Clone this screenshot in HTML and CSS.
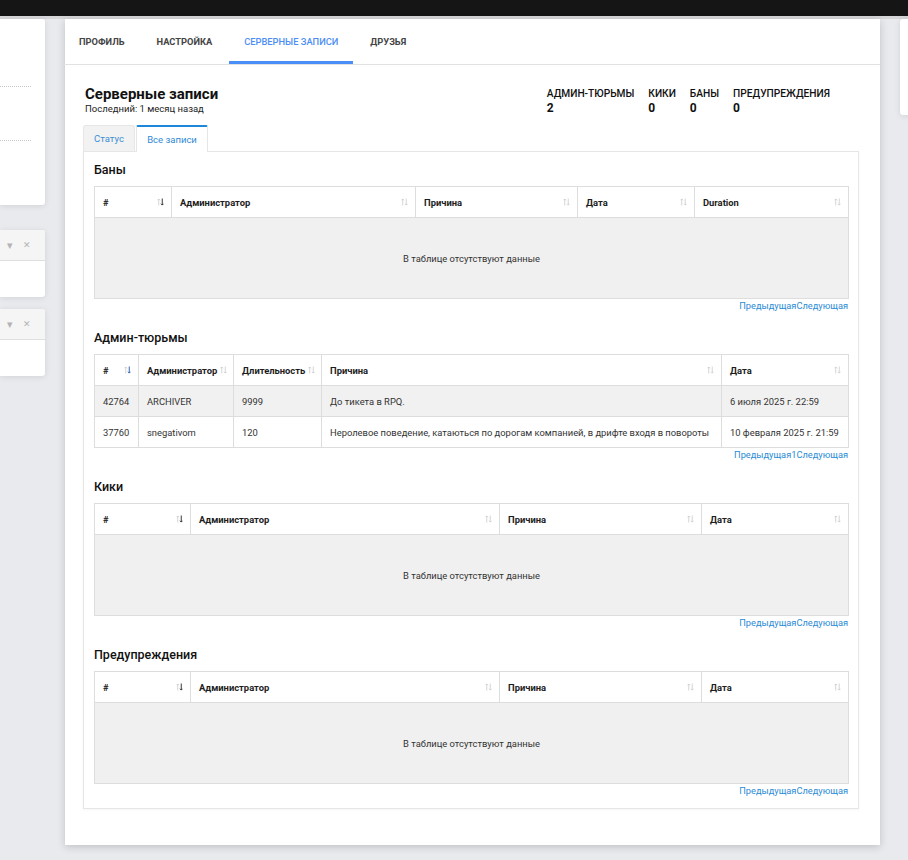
FILE: index.html
```html
<!DOCTYPE html>
<html lang="ru">
<head>
<meta charset="utf-8">
<title>Серверные записи</title>
<link rel="stylesheet" href="styles.css">
</head>
<body>
<div class="topbar"></div>
<div class="layout">
  <aside class="left-col">
    <div class="side-card side-card--tall">
      <div class="dotted dotted--one"></div>
      <div class="dotted dotted--two"></div>
    </div>
    <div class="side-card side-card--widget">
      <div class="widget-head"><span class="w-caret">▾</span><span class="w-close">✕</span></div>
      <div class="widget-body"></div>
    </div>
    <div class="side-card side-card--widget side-card--second">
      <div class="widget-head"><span class="w-caret">▾</span><span class="w-close">✕</span></div>
      <div class="widget-body"></div>
    </div>
  </aside>

  <main class="main-card">
    <nav class="nav">
      <a class="nav-tab">ПРОФИЛЬ</a>
      <a class="nav-tab">НАСТРОЙКА</a>
      <a class="nav-tab nav-tab--active">СЕРВЕРНЫЕ ЗАПИСИ</a>
      <a class="nav-tab">ДРУЗЬЯ</a>
    </nav>
    <div class="content">
      <div class="head-row">
        <div class="title-block">
          <h1 class="title">Серверные записи</h1>
          <div class="subtitle">Последний: 1 месяц назад</div>
        </div>
        <div class="stats">
          <div class="stat"><div class="stat-label">АДМИН-ТЮРЬМЫ</div><div class="stat-num">2</div></div>
          <div class="stat"><div class="stat-label">КИКИ</div><div class="stat-num">0</div></div>
          <div class="stat"><div class="stat-label">БАНЫ</div><div class="stat-num">0</div></div>
          <div class="stat"><div class="stat-label">ПРЕДУПРЕЖДЕНИЯ</div><div class="stat-num">0</div></div>
        </div>
      </div>

      <div class="tabs">
        <div class="tab">Статус</div>
        <div class="tab tab--active">Все записи</div>
      </div>

      <div class="panel">
        <section class="section">
          <h3 class="sec-title">Баны</h3>
          <table class="dt">
            <colgroup><col class="w77"><col class="w244"><col class="w162"><col class="w117"><col class="w154"></colgroup>
            <thead><tr>
              <th>#<span class="sort sort--desc"><svg viewBox="0 0 8 9"><path class="up" d="M2 8.5V1M0.5 2.5L2 1l1.5 1.5"/><path class="dn" d="M6 0.5V8M4.5 6.5L6 8l1.5-1.5"/></svg></span></th>
              <th>Администратор<span class="sort"><svg viewBox="0 0 8 9"><path class="up" d="M2 8.5V1M0.5 2.5L2 1l1.5 1.5"/><path class="dn" d="M6 0.5V8M4.5 6.5L6 8l1.5-1.5"/></svg></span></th>
              <th>Причина<span class="sort"><svg viewBox="0 0 8 9"><path class="up" d="M2 8.5V1M0.5 2.5L2 1l1.5 1.5"/><path class="dn" d="M6 0.5V8M4.5 6.5L6 8l1.5-1.5"/></svg></span></th>
              <th>Дата<span class="sort"><svg viewBox="0 0 8 9"><path class="up" d="M2 8.5V1M0.5 2.5L2 1l1.5 1.5"/><path class="dn" d="M6 0.5V8M4.5 6.5L6 8l1.5-1.5"/></svg></span></th>
              <th>Duration<span class="sort"><svg viewBox="0 0 8 9"><path class="up" d="M2 8.5V1M0.5 2.5L2 1l1.5 1.5"/><path class="dn" d="M6 0.5V8M4.5 6.5L6 8l1.5-1.5"/></svg></span></th>
            </tr></thead>
            <tbody><tr><td class="empty" colspan="5">В таблице отсутствуют данные</td></tr></tbody>
          </table>
          <div class="pager"><a>Предыдущая</a><a>Следующая</a></div>
        </section>

        <section class="section">
          <h3 class="sec-title">Админ-тюрьмы</h3>
          <table class="dt">
            <colgroup><col class="w44"><col class="w95"><col class="w88"><col class="w400"><col class="w127"></colgroup>
            <thead><tr>
              <th>#<span class="sort sort--desc-blue"><svg viewBox="0 0 8 9"><path class="up" d="M2 8.5V1M0.5 2.5L2 1l1.5 1.5"/><path class="dn" d="M6 0.5V8M4.5 6.5L6 8l1.5-1.5"/></svg></span></th>
              <th>Администратор<span class="sort sort--tight"><svg viewBox="0 0 8 9"><path class="up" d="M2 8.5V1M0.5 2.5L2 1l1.5 1.5"/><path class="dn" d="M6 0.5V8M4.5 6.5L6 8l1.5-1.5"/></svg></span></th>
              <th>Длительность<span class="sort sort--tight"><svg viewBox="0 0 8 9"><path class="up" d="M2 8.5V1M0.5 2.5L2 1l1.5 1.5"/><path class="dn" d="M6 0.5V8M4.5 6.5L6 8l1.5-1.5"/></svg></span></th>
              <th>Причина<span class="sort"><svg viewBox="0 0 8 9"><path class="up" d="M2 8.5V1M0.5 2.5L2 1l1.5 1.5"/><path class="dn" d="M6 0.5V8M4.5 6.5L6 8l1.5-1.5"/></svg></span></th>
              <th>Дата<span class="sort"><svg viewBox="0 0 8 9"><path class="up" d="M2 8.5V1M0.5 2.5L2 1l1.5 1.5"/><path class="dn" d="M6 0.5V8M4.5 6.5L6 8l1.5-1.5"/></svg></span></th>
            </tr></thead>
            <tbody>
              <tr class="odd"><td>42764</td><td>ARCHIVER</td><td>9999</td><td>До тикета в RPQ.</td><td>6 июля 2025 г. 22:59</td></tr>
              <tr><td>37760</td><td>snegativom</td><td>120</td><td>Неролевое поведение, катаються по дорогам компанией, в дрифте входя в повороты</td><td>10 февраля 2025 г. 21:59</td></tr>
            </tbody>
          </table>
          <div class="pager"><a>Предыдущая</a><a>1</a><a>Следующая</a></div>
        </section>

        <section class="section">
          <h3 class="sec-title">Кики</h3>
          <table class="dt">
            <colgroup><col class="w96"><col class="w309"><col class="w202"><col class="w147"></colgroup>
            <thead><tr>
              <th>#<span class="sort sort--desc"><svg viewBox="0 0 8 9"><path class="up" d="M2 8.5V1M0.5 2.5L2 1l1.5 1.5"/><path class="dn" d="M6 0.5V8M4.5 6.5L6 8l1.5-1.5"/></svg></span></th>
              <th>Администратор<span class="sort"><svg viewBox="0 0 8 9"><path class="up" d="M2 8.5V1M0.5 2.5L2 1l1.5 1.5"/><path class="dn" d="M6 0.5V8M4.5 6.5L6 8l1.5-1.5"/></svg></span></th>
              <th>Причина<span class="sort"><svg viewBox="0 0 8 9"><path class="up" d="M2 8.5V1M0.5 2.5L2 1l1.5 1.5"/><path class="dn" d="M6 0.5V8M4.5 6.5L6 8l1.5-1.5"/></svg></span></th>
              <th>Дата<span class="sort"><svg viewBox="0 0 8 9"><path class="up" d="M2 8.5V1M0.5 2.5L2 1l1.5 1.5"/><path class="dn" d="M6 0.5V8M4.5 6.5L6 8l1.5-1.5"/></svg></span></th>
            </tr></thead>
            <tbody><tr><td class="empty" colspan="4">В таблице отсутствуют данные</td></tr></tbody>
          </table>
          <div class="pager"><a>Предыдущая</a><a>Следующая</a></div>
        </section>

        <section class="section">
          <h3 class="sec-title">Предупреждения</h3>
          <table class="dt">
            <colgroup><col class="w96"><col class="w309"><col class="w202"><col class="w147"></colgroup>
            <thead><tr>
              <th>#<span class="sort sort--desc"><svg viewBox="0 0 8 9"><path class="up" d="M2 8.5V1M0.5 2.5L2 1l1.5 1.5"/><path class="dn" d="M6 0.5V8M4.5 6.5L6 8l1.5-1.5"/></svg></span></th>
              <th>Администратор<span class="sort"><svg viewBox="0 0 8 9"><path class="up" d="M2 8.5V1M0.5 2.5L2 1l1.5 1.5"/><path class="dn" d="M6 0.5V8M4.5 6.5L6 8l1.5-1.5"/></svg></span></th>
              <th>Причина<span class="sort"><svg viewBox="0 0 8 9"><path class="up" d="M2 8.5V1M0.5 2.5L2 1l1.5 1.5"/><path class="dn" d="M6 0.5V8M4.5 6.5L6 8l1.5-1.5"/></svg></span></th>
              <th>Дата<span class="sort"><svg viewBox="0 0 8 9"><path class="up" d="M2 8.5V1M0.5 2.5L2 1l1.5 1.5"/><path class="dn" d="M6 0.5V8M4.5 6.5L6 8l1.5-1.5"/></svg></span></th>
            </tr></thead>
            <tbody><tr><td class="empty" colspan="4">В таблице отсутствуют данные</td></tr></tbody>
          </table>
          <div class="pager"><a>Предыдущая</a><a>Следующая</a></div>
        </section>
      </div>
    </div>
  </main>

  <aside class="right-col">
    <div class="side-card side-card--right"></div>
  </aside>
</div>
</body>
</html>
```
FILE: styles.css
```css
* { box-sizing: border-box; }

html, body {
  margin: 0;
  padding: 0;
  height: 100%;
  overflow: hidden;
}

body {
  background: #e9eaee;
  font-family: Roboto, "Noto Sans", "Liberation Sans", sans-serif;
  color: #222;
}

.topbar {
  height: 19px;
  background: #151515;
  border-bottom: 3px solid #d6d6d8;
}

.layout {
  display: flex;
  align-items: flex-start;
  gap: 20px;
}

/* ---------- side columns ---------- */
.left-col {
  width: 45px;
  flex: 0 0 45px;
  display: flex;
  flex-direction: column;
}

.side-card {
  background: #fff;
  box-shadow: 0 1px 6px rgba(0, 0, 0, 0.10);
  border-radius: 0 3px 3px 0;
}

.side-card--tall {
  height: 186px;
  position: relative;
}

.dotted {
  position: absolute;
  left: 0;
  width: 31px;
  border-top: 1px dotted #c8c8c8;
}
.dotted--one { top: 67px; }
.dotted--two { top: 121px; }

.side-card--widget {
  margin-top: 25px;
  height: 67px;
  overflow: hidden;
}
.side-card--second { margin-top: 12px; }

.widget-head {
  height: 31px;
  background: #f5f5f5;
  border-bottom: 1px solid #dedede;
  display: flex;
  align-items: center;
  gap: 10px;
  padding-left: 7px;
  color: #b4b4b4;
  font-size: 10px;
}
.w-caret { font-size: 11px; }
.w-close { font-size: 9px; }

.right-col {
  flex: 0 0 40px;
}
.side-card--right {
  height: 96px;
  border-radius: 3px 0 0 3px;
}

/* ---------- main card ---------- */
.main-card {
  flex: 0 0 815px;
  width: 815px;
  background: #fff;
  box-shadow: 0 2px 8px rgba(0, 0, 0, 0.18);
}

.nav {
  display: flex;
  gap: 2px;
  height: 46px;
  border-bottom: 1px solid #e2e2e2;
  margin-left: -1px;
}

.nav-tab {
  display: flex;
  align-items: center;
  padding: 3px 15px 0 15px;
  font-size: 9.3px;
  font-weight: 700;
  color: #444;
  border-bottom: 3px solid transparent;
}
.nav-tab--active {
  color: #4d8ef5;
  font-weight: 500;
  border-bottom-color: #4a8ff7;
}

.content {
  padding: 20px 21px 36px 18px;
}

.head-row {
  display: flex;
  justify-content: space-between;
  align-items: flex-start;
  padding-left: 2px;
}

.title {
  margin: 0;
  font-size: 15px;
  line-height: 18px;
  font-weight: 700;
  color: #111;
}

.subtitle {
  font-size: 9.5px;
  line-height: 12px;
  color: #222;
}

.stats {
  display: flex;
  gap: 14px;
  margin-top: 3px;
  margin-right: 29px;
}

.stat-label {
  font-size: 10.2px;
  line-height: 12px;
  font-weight: 500;
  color: #111;
}

.stat-num {
  font-size: 12px;
  line-height: 14px;
  font-weight: 700;
  color: #111;
  margin-top: 1px;
}

/* ---------- tabs ---------- */
.tabs {
  display: flex;
  margin-top: 10px;
  gap: 1px;
}

.tab {
  height: 26px;
  width: 52px;
  display: flex;
  align-items: center;
  justify-content: center;
  font-size: 9.5px;
  color: #3b8fd4;
  background: #f2f2f2;
  border: 1px solid #e6e6e6;
  border-bottom: none;
  border-radius: 3px 3px 0 0;
}
.tab--active {
  width: 72px;
  background: #fff;
  border-top: 2px solid #1d87d9;
  border-radius: 2px 2px 0 0;
  color: #2f8ad6;
  margin-bottom: -1px;
  height: 27px;
  position: relative;
}

.panel {
  border: 1px solid #e6e6e6;
  padding: 8px 10px 10px 10px;
  box-shadow: 0 1px 2px rgba(0, 0, 0, 0.04);
}

.section + .section { margin-top: 15px; }

.sec-title {
  margin: 0 0 6px 0;
  font-size: 12.5px;
  line-height: 20px;
  font-weight: 500;
  color: #111;
}

/* ---------- tables ---------- */
.dt {
  width: 100%;
  border-collapse: collapse;
  table-layout: fixed;
  font-size: 9.4px;
}

.w44 { width: 44px; }
.w77 { width: 77px; }
.w88 { width: 88px; }
.w95 { width: 95px; }
.w96 { width: 96px; }
.w117 { width: 117px; }
.w127 { width: 127px; }
.w147 { width: 147px; }
.w154 { width: 154px; }
.w162 { width: 162px; }
.w202 { width: 202px; }
.w244 { width: 244px; }
.w309 { width: 309px; }
.w400 { width: 400px; }

.dt th, .dt td {
  border: 1px solid #dddddd;
  height: 31px;
  padding: 0 8px;
  text-align: left;
  white-space: nowrap;
  overflow: hidden;
}

.dt th {
  font-weight: 700;
  color: #1c1c1c;
  position: relative;
  background: #fff;
}

.dt td {
  color: #333;
}

.dt tr.odd td { background: #f1f1f1; }

.dt td.empty {
  height: 81px;
  text-align: center;
  background: #f0f0f0;
  color: #333;
}

.sort {
  position: absolute;
  right: 7px;
  top: 50%;
  transform: translateY(-50%);
  width: 7px;
  height: 9px;
  display: block;
}
.sort--tight { right: 6px; }
.sort svg { width: 7px; height: 9px; display: block; }
.sort path {
  fill: none;
  stroke: #c9c9c9;
  stroke-width: 0.9;
}
.sort--desc .dn { stroke: #333; stroke-width: 1.1; }
.sort--desc-blue .dn { stroke: #2b5fb6; stroke-width: 1.1; }

.pager {
  display: flex;
  justify-content: flex-end;
  margin-top: 0;
  font-size: 9.25px;
  line-height: 14px;
  color: #2a8bd6;
}
```
